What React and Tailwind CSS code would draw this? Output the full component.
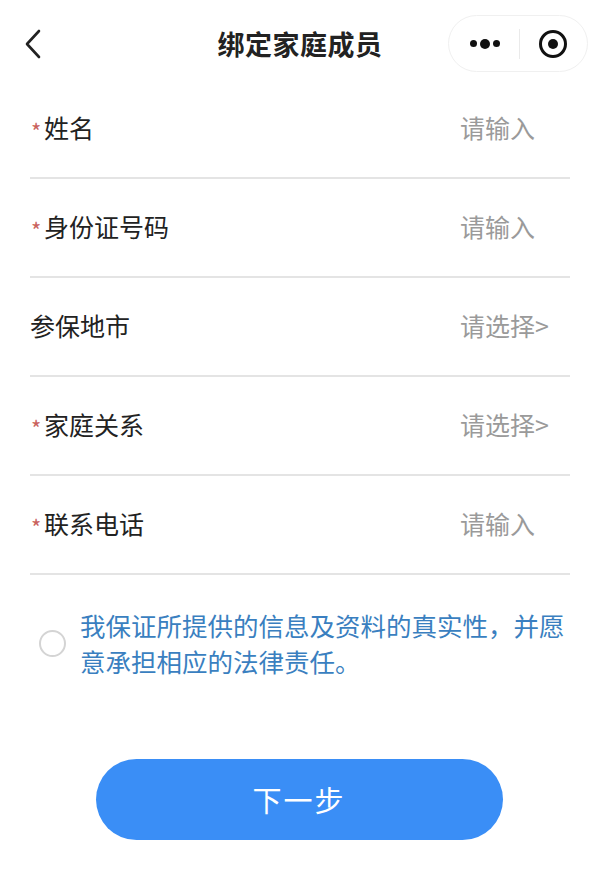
import React, { useState } from 'react';

const FIELDS = [
  { label: '姓名', required: true, placeholder: '请输入' },
  { label: '身份证号码', required: true, placeholder: '请输入' },
  { label: '参保地市', required: false, placeholder: '请选择>' },
  { label: '家庭关系', required: true, placeholder: '请选择>' },
  { label: '联系电话', required: true, placeholder: '请输入' },
];

export default function App() {
  const [agreed, setAgreed] = useState(false);

  return (
    <div className="w-[600px] min-h-[872px] bg-white font-['Noto_Sans_CJK_SC',sans-serif] text-[#222]">
      {/* 顶部导航 */}
      <div className="relative h-[80px] flex items-center justify-center">
        <button className="absolute left-[22px] top-[28px] w-[22px] h-[32px]">
          <svg width="22" height="32" viewBox="0 0 22 32" fill="none">
            <path d="M17 3 L5 16 L17 29" stroke="#222" strokeWidth="2.6" strokeLinecap="round" strokeLinejoin="round" />
          </svg>
        </button>
        <h1 className="text-[27px] font-bold leading-none mt-[6px] tracking-[0.5px]">绑定家庭成员</h1>
        <div className="absolute left-[448px] top-[15px] w-[140px] h-[57px] rounded-full border border-[#f0f0f0] bg-white flex items-center">
          <div className="flex-1 flex items-center justify-center gap-[3px] pl-[2px]">
            <span className="w-[7px] h-[7px] rounded-full bg-[#111]" />
            <span className="w-[10px] h-[10px] rounded-full bg-[#111]" />
            <span className="w-[7px] h-[7px] rounded-full bg-[#111]" />
          </div>
          <div className="w-px h-[30px] bg-[#eaeaea]" />
          <div className="flex-1 flex items-center justify-center">
            <div className="w-[28px] h-[28px] rounded-full border-[3px] border-[#111] flex items-center justify-center">
              <div className="w-[10px] h-[10px] rounded-full bg-[#111]" />
            </div>
          </div>
        </div>
      </div>

      {/* 表单 */}
      <div className="px-[30px]">
        {FIELDS.map((f) => (
          <div key={f.label} className="h-[99px] flex items-center justify-between border-b-2 border-[#e4e4e4] pb-[2px]">
            <div className="flex items-center text-[25px] leading-none">
              {f.required ? (
                <span className="text-[#c9625c] text-[22px] w-[14px] pl-[1px] mt-[4px]">*</span>
              ) : null}
              <span>{f.label}</span>
            </div>
            <span className={`text-[25px] leading-none text-[#9a9a9a] ${f.placeholder === '请输入' ? 'mr-[35px]' : 'mr-[21px]'}`}>
              {f.placeholder}
            </span>
          </div>
        ))}
      </div>

      {/* 承诺 */}
      <div className="flex items-center pl-[39px] mt-[32px]">
        <button
          onClick={() => setAgreed(!agreed)}
          className={`shrink-0 w-[27px] h-[27px] rounded-full border-2 ${agreed ? 'border-[#3b8ff6] bg-[#3b8ff6]' : 'border-[#d4d4d4]'}`}
        />
        <p className="ml-[14px] w-[487px] text-[25.5px] leading-[36px] text-[#3a7fc0]">
          我保证所提供的信息及资料的真实性，并愿意承担相应的法律责任。
        </p>
      </div>

      {/* 下一步 */}
      <div className="flex justify-center mt-[80px] pr-[2px]">
        <button className="w-[407px] h-[81px] rounded-full bg-[#3a8ef6] text-white text-[29px] tracking-[2px]">
          下一步
        </button>
      </div>
    </div>
  );
}
